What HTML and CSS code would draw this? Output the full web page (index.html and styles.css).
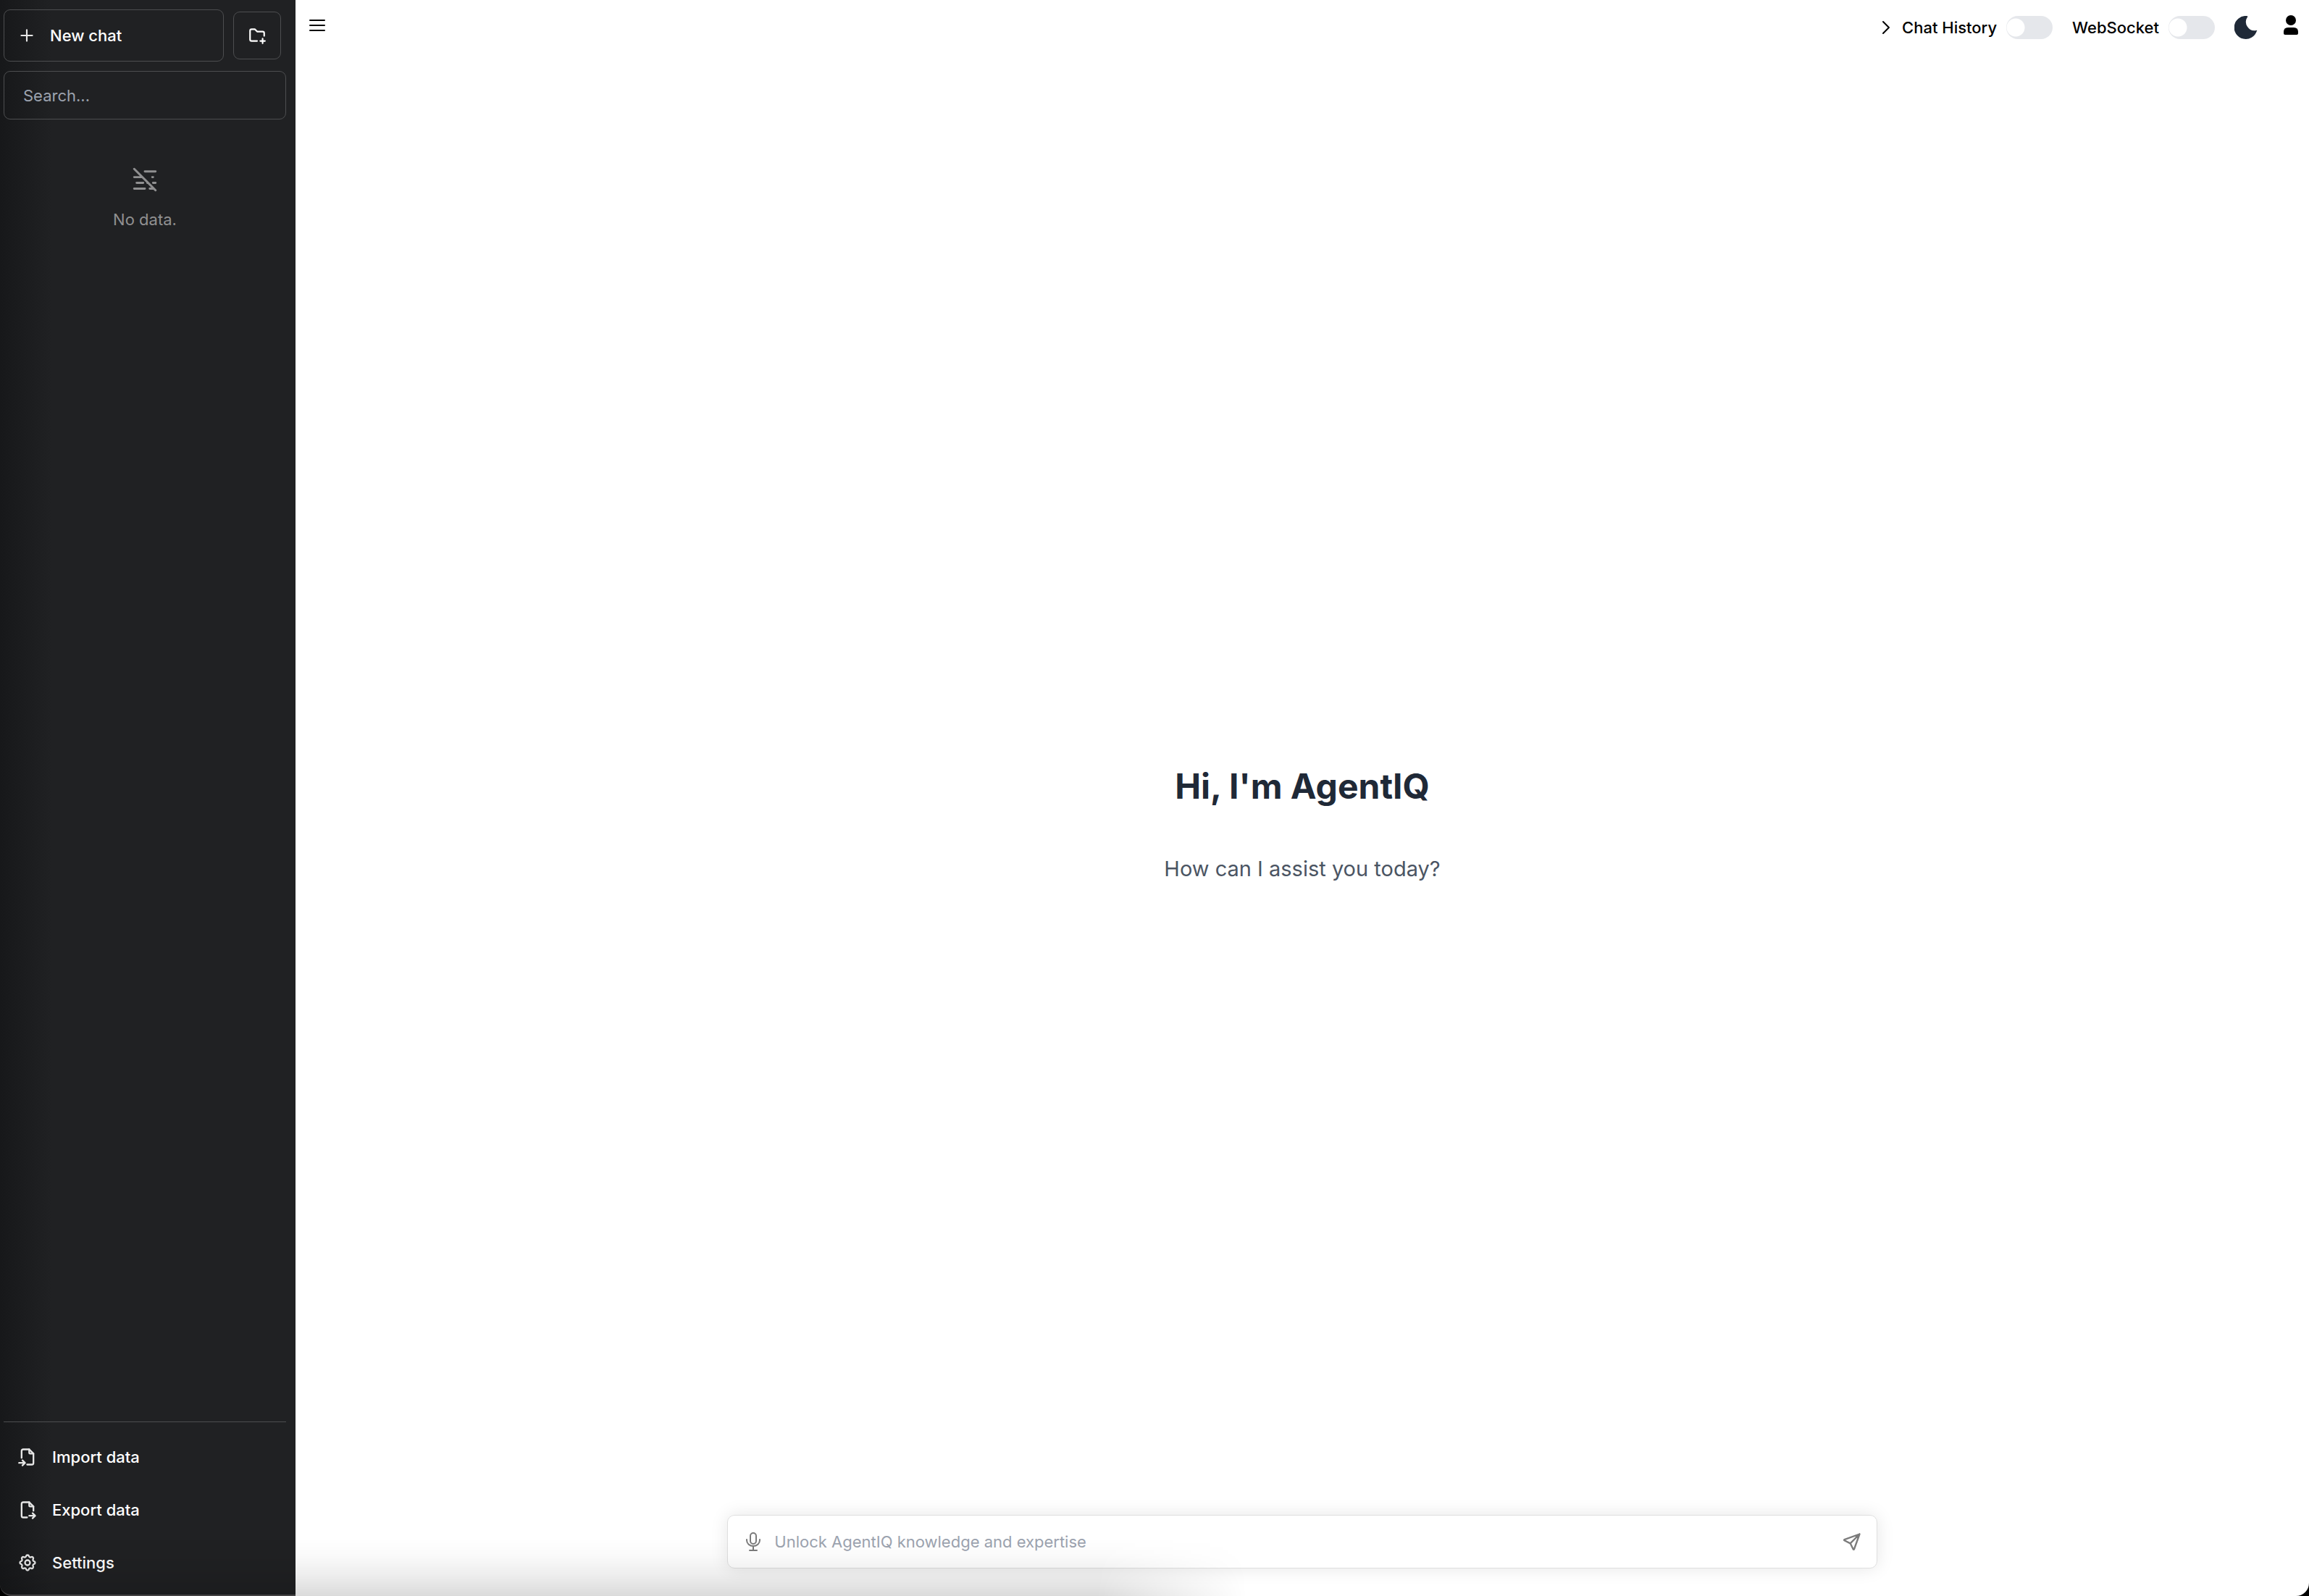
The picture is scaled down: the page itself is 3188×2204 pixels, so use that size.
FILE: index.html
```html
<!DOCTYPE html>
<html lang="en">
<head>
<meta charset="utf-8">
<title>AgentIQ</title>
<link rel="stylesheet" href="styles.css">
</head>
<body>
<div class="app">
  <aside class="sidebar">
    <div class="top-row">
      <button class="outline new-chat" type="button">
        <svg class="icon" viewBox="0 0 24 24"><path d="M12 5v14M5 12h14"/></svg>
        <span>New chat</span>
      </button>
      <button class="outline new-folder" type="button" aria-label="New folder">
        <svg class="icon" viewBox="0 0 24 24"><path d="M12 19H5a2 2 0 0 1-2-2V6a2 2 0 0 1 2-2h4l3 3h7a2 2 0 0 1 2 2v3.500M16 19h6M19 16v6"/></svg>
      </button>
    </div>
    <input class="outline search" type="text" placeholder="Search..." aria-label="Search">
    <div class="empty">
      <svg class="icon-large" viewBox="0 0 15 15"><path d="M1 1l13 13M7.500 2.500H14M1 6h5M12 6h.500M2.500 9.500h4M12.500 9.500H14M9 9.500h.300M1 13h6.500M10.500 13H12.500"/></svg>
      <span>No data.</span>
    </div>
    <nav class="bottom-nav">
      <button class="nav-item" type="button">
        <svg class="icon" viewBox="0 0 24 24"><path d="M14 3v4a1 1 0 0 0 1 1h4"/><path d="M5 13V5a2 2 0 0 1 2-2h7l5 5v11a2 2 0 0 1-2 2h-5.500M2 19h7m-3-3l3 3l-3 3"/></svg>
        <span>Import data</span>
      </button>
      <button class="nav-item" type="button">
        <svg class="icon" viewBox="0 0 24 24"><path d="M14 3v4a1 1 0 0 0 1 1h4"/><path d="M11.500 21H7a2 2 0 0 1-2-2V5a2 2 0 0 1 2-2h7l5 5v5m-5 6h7m-3-3l3 3l-3 3"/></svg>
        <span>Export data</span>
      </button>
      <button class="nav-item" type="button">
        <svg class="icon" viewBox="0 0 24 24"><path d="M10.325 4.317c.426-1.756 2.924-1.756 3.350 0a1.724 1.724 0 0 0 2.573 1.066c1.543-.940 3.310.826 2.370 2.370a1.724 1.724 0 0 0 1.065 2.572c1.756.426 1.756 2.924 0 3.350a1.724 1.724 0 0 0-1.066 2.573c.940 1.543-.826 3.310-2.370 2.370a1.724 1.724 0 0 0-2.572 1.065c-.426 1.756-2.924 1.756-3.350 0a1.724 1.724 0 0 0-2.573-1.066c-1.543.940-3.310-.826-2.370-2.370a1.724 1.724 0 0 0-1.065-2.572c-1.756-.426-1.756-2.924 0-3.350a1.724 1.724 0 0 0 1.066-2.573c-.940-1.543.826-3.310 2.370-2.370c1 .608 2.296.070 2.572-1.065z"/><circle cx="12" cy="12" r="3"/></svg>
        <span>Settings</span>
      </button>
    </nav>
  </aside>
  <main class="main">
    <header class="header">
      <button class="plain raised" type="button" aria-label="Toggle sidebar">
        <svg class="menu-icon" viewBox="0 0 24 18"><path d="M2 2h20M2 9h20M2 16h20"/></svg>
      </button>
      <div class="header-tools">
        <div class="tool-group history">
          <button class="plain" type="button" aria-label="Collapse menu">
            <svg class="chevron" viewBox="0 0 12 20"><path d="M2 2l8 8l-8 8"/></svg>
          </button>
          <label class="switch"><span>Chat History</span><input type="checkbox"></label>
        </div>
        <label class="switch"><span>WebSocket</span><input type="checkbox"></label>
        <div class="tool-group account">
          <button class="plain" type="button" aria-label="Dark mode">
            <svg class="moon" viewBox="0 0 32 32"><path d="M17 0A16 16 0 1 0 31 20.500q1-1-1-.500A12 12 0 0 1 18 1.500q1-1.500-1-1.500z"/></svg>
          </button>
          <button class="plain raised" type="button" aria-label="Account">
            <svg class="person" viewBox="0 0 20 28"><circle cx="10" cy="7" r="7"/><path d="M0 25v-2q0-6 6-6h8q6 0 6 6v2q0 2-2 2H2q-2 0-2-2z"/></svg>
          </button>
        </div>
      </div>
    </header>
    <section class="welcome">
      <h1>Hi, I'm AgentIQ</h1>
      <p>How can I assist you today?</p>
    </section>
    <form class="composer">
      <button class="plain" type="button" aria-label="Record">
        <svg class="mic" viewBox="0 0 20 26"><rect x="6" y="1" width="8" height="15" rx="4"/><path d="M1 10v1a9 8 0 0 0 18 0v-1M10 19v6M5 25h10"/></svg>
      </button>
      <input class="prompt" type="text" placeholder="Unlock AgentIQ knowledge and expertise" aria-label="Message">
      <button class="plain" type="submit" aria-label="Send">
        <svg class="send" viewBox="0 0 24 24"><path d="M10 14L21 3M21 3l-6.500 18a.550.550 0 0 1-1 0L10 14l-7-3.500a.550.550 0 0 1 0-1L21 3"/></svg>
      </button>
    </form>
  </main>
</div>
</body>
</html>
```
FILE: styles.css
```css
* { box-sizing: border-box; }
body {
  margin: 0;
  font-family: Inter, "Liberation Sans", sans-serif;
  font-size: 22px;
  line-height: 32px;
  color: #000;
  background: #000;
}
button, input { font: inherit; color: inherit; }
button { background: none; border: 0; padding: 0; cursor: pointer; }
svg { display: block; fill: none; stroke: currentColor; stroke-width: 2; stroke-linecap: round; stroke-linejoin: round; }
.app { position: relative; display: flex; min-height: 100vh; }

/* soft shade along the bottom edge, fading out past the middle */
.app::after {
  content: "";
  position: absolute;
  left: 0;
  bottom: 0;
  width: 54%;
  height: 80px;
  border-bottom-left-radius: 16px;
  pointer-events: none;
  background: linear-gradient(to top, rgba(0, 0, 0, .14), rgba(0, 0, 0, .07) 35%, rgba(0, 0, 0, .02) 70%, transparent);
  mask-image: linear-gradient(to right, #000 88%, transparent);
}
.sidebar {
  flex: 0 0 408px;
  display: flex;
  flex-direction: column;
  padding: 13px 13px 8px 5px;
  color: #fff;
  background: linear-gradient(to right, #17181a, #202123 72px);
  border-bottom: 2px solid #4f4d4f;
  border-bottom-left-radius: 16px;
}
.top-row { display: flex; align-items: center; gap: 13px; margin-bottom: 13px; }
.outline { border: 1px solid #4d4e50; border-radius: 9px; }
.icon { width: 26px; height: 26px; flex: none; }
.new-chat { width: 304px; height: 72px; padding: 0 18px; display: flex; align-items: center; gap: 19px; font-weight: 500; }
.new-folder { width: 66px; height: 66px; display: grid; place-items: center; }
.search { width: 100%; height: 67px; padding: 0 26px; background: none; }
.search::placeholder, .prompt::placeholder { color: #9ca3af; opacity: 1; }
.empty { flex: 1; padding-top: 66px; display: flex; flex-direction: column; align-items: center; gap: 22px; color: #909091; }
.icon-large { width: 34px; height: 34px; stroke-width: 1.300; }
.bottom-nav { border-top: 1px solid #4d4e50; padding-top: 11px; display: flex; flex-direction: column; }
.nav-item { height: 73px; padding: 0 19px; display: flex; align-items: center; gap: 20px; font-weight: 500; }
.nav-item .icon { width: 28px; height: 28px; }
.nav-item .icon, .new-chat .icon { color: #e6e6e6; }
.main {
  flex: 1;
  display: flex;
  flex-direction: column;
  align-items: center;
  background: #fff;
  border-bottom-right-radius: 18px;
}
.header { width: 100%; height: 76px; padding: 0 15px 0 18px; display: flex; align-items: center; justify-content: space-between; }
.raised { padding-bottom: 6px; }
.menu-icon { width: 24px; height: 18px; }
.header-tools { display: flex; align-items: center; gap: 27px; font-weight: 500; }
.tool-group { display: flex; align-items: center; }
.history { gap: 16px; }
.account { gap: 36px; }
.chevron { width: 12px; height: 20px; }
.switch { display: flex; align-items: center; gap: 13px; }
.switch input {
  appearance: none;
  margin: 0;
  width: 64px;
  height: 32px;
  border-radius: 16px;
  background: radial-gradient(circle at 13px 16px, #fff 12px, #e5e7eb 13px);
}
.moon { width: 32px; height: 32px; fill: #1f2937; stroke: none; }
.person { width: 20px; height: 28px; fill: #000; stroke: none; }
.welcome { flex: 1; display: flex; flex-direction: column; align-items: center; padding-top: 974px; }
h1 { margin: 0; font-size: 48px; line-height: 72px; font-weight: 700; color: #1f2937; }
p { margin: 58px 0 0; font-size: 29px; line-height: 40px; color: #4b5563; }
.composer {
  width: 57.100%;
  height: 74px;
  margin-bottom: 38px;
  padding: 0 20px 0 25px;
  display: flex;
  align-items: center;
  gap: 19px;
  border: 1px solid #dfdfdf;
  border-radius: 10px;
  box-shadow: 0 0 24px rgba(0, 0, 0, .1);
}
.composer svg { color: #7b7b7b; }
.prompt { flex: 1; border: 0; padding: 0; background: none; }
.mic { width: 20px; height: 26px; }
.send { width: 28px; height: 28px; }
```
